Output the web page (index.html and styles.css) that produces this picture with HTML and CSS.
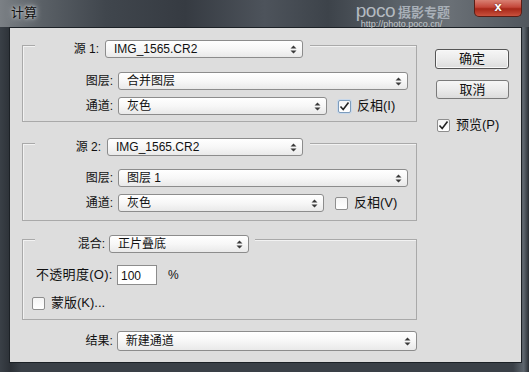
FILE: index.html
```html
<!DOCTYPE html>
<html lang="zh-CN">
<head>
    <meta charset="UTF-8">
    <title>计算</title>
    <link rel="stylesheet" href="styles.css">
</head>
<body>
    <div class="window">
        <div class="titlebar">
            <span class="title">计算</span>
            <div class="watermark">
                <div class="wm-top"><span class="wm-poco">poco</span><span class="wm-cn">摄影专题</span></div>
                <div class="wm-url">http://photo.poco.cn/</div>
            </div>
            <div class="close">x</div>
        </div>

        <div class="panel">
            <div class="main">
                <!-- 源 1 -->
                <div class="group g1">
                    <div class="group-head">
                        <span class="lbl head-lbl1">源 1:</span>
                        <div class="select src1">IMG_1565.CR2<span class="arrows"><svg width="7" height="9" viewBox="0 0 7 9"><path d="M3.5 0.5 L6.5 3.5 H0.5 Z M0.5 5.5 H6.5 L3.5 8.5 Z" fill="#3a3a3a"/></svg></span></div>
                    </div>
                    <div class="row r-layer">
                        <span class="lbl">图层:</span>
                        <div class="select wide">合并图层<span class="arrows"><svg width="7" height="9" viewBox="0 0 7 9"><path d="M3.5 0.5 L6.5 3.5 H0.5 Z M0.5 5.5 H6.5 L3.5 8.5 Z" fill="#3a3a3a"/></svg></span></div>
                    </div>
                    <div class="row r-channel">
                        <span class="lbl">通道:</span>
                        <div class="select ch1">灰色<span class="arrows"><svg width="7" height="9" viewBox="0 0 7 9"><path d="M3.5 0.5 L6.5 3.5 H0.5 Z M0.5 5.5 H6.5 L3.5 8.5 Z" fill="#3a3a3a"/></svg></span></div>
                        <div class="check invert">
                            <span class="box focus"><svg width="11" height="11" viewBox="0 0 11 11"><path d="M1.5 5.5 L4.2 8.5 L9.5 1.5" fill="none" stroke="#222" stroke-width="1.6"/></svg></span>
                            <span>反相(I)</span>
                        </div>
                    </div>
                </div>

                <!-- 源 2 -->
                <div class="group g2">
                    <div class="group-head">
                        <span class="lbl head-lbl2">源 2:</span>
                        <div class="select src2">IMG_1565.CR2<span class="arrows"><svg width="7" height="9" viewBox="0 0 7 9"><path d="M3.5 0.5 L6.5 3.5 H0.5 Z M0.5 5.5 H6.5 L3.5 8.5 Z" fill="#3a3a3a"/></svg></span></div>
                    </div>
                    <div class="row r-layer2">
                        <span class="lbl">图层:</span>
                        <div class="select wide">图层 1<span class="arrows"><svg width="7" height="9" viewBox="0 0 7 9"><path d="M3.5 0.5 L6.5 3.5 H0.5 Z M0.5 5.5 H6.5 L3.5 8.5 Z" fill="#3a3a3a"/></svg></span></div>
                    </div>
                    <div class="row r-channel">
                        <span class="lbl">通道:</span>
                        <div class="select ch2">灰色<span class="arrows"><svg width="7" height="9" viewBox="0 0 7 9"><path d="M3.5 0.5 L6.5 3.5 H0.5 Z M0.5 5.5 H6.5 L3.5 8.5 Z" fill="#3a3a3a"/></svg></span></div>
                        <div class="check invert">
                            <span class="box"></span>
                            <span>反相(V)</span>
                        </div>
                    </div>
                </div>

                <!-- 混合 -->
                <div class="group g3">
                    <div class="group-head head3">
                        <span class="lbl head-lbl3">混合:</span>
                        <div class="select blend">正片叠底<span class="arrows"><svg width="7" height="9" viewBox="0 0 7 9"><path d="M3.5 0.5 L6.5 3.5 H0.5 Z M0.5 5.5 H6.5 L3.5 8.5 Z" fill="#3a3a3a"/></svg></span></div>
                    </div>
                    <div class="opacity-row">
                        <span class="op-lbl">不透明度(O):</span>
                        <div class="num">100</div>
                        <span class="pct">%</span>
                    </div>
                    <div class="check mask">
                        <span class="box"></span>
                        <span>蒙版(K)...</span>
                    </div>
                </div>

                <div class="row result">
                    <span class="lbl">结果:</span>
                    <div class="select res">新建通道<span class="arrows"><svg width="7" height="9" viewBox="0 0 7 9"><path d="M3.5 0.5 L6.5 3.5 H0.5 Z M0.5 5.5 H6.5 L3.5 8.5 Z" fill="#3a3a3a"/></svg></span></div>
                </div>
            </div>

            <div class="side">
                <div class="btn default">确定</div>
                <div class="btn cancel">取消</div>
                <div class="check preview">
                    <span class="box"><svg width="11" height="11" viewBox="0 0 11 11"><path d="M1.5 5.5 L4.2 8.5 L9.5 1.5" fill="none" stroke="#222" stroke-width="1.6"/></svg></span>
                    <span>预览(P)</span>
                </div>
            </div>
        </div>
    </div>
</body>
</html>
```

FILE: styles.css
```css
* {
    box-sizing: border-box;
}
body {
    margin: 0;
    font-family: "Liberation Sans", "Noto Sans CJK SC", sans-serif;
    font-size: 12px;
    line-height: 16px;
    color: #111;
    background: #2b3036;
}
.window {
    width: 529px;
    height: 372px;
    overflow: hidden;
    background: linear-gradient(to right, #3a4047 0%, #2c3137 2%, #3a4047 4%, #3a4047 97%, #5d656d 99%, #2a2f35 100%);
}
.titlebar {
    height: 27px;
    display: flex;
    align-items: flex-start;
    background: linear-gradient(to right, #7b8085 0%, #5a6066 8%, #40464d 20%, #363b42 35%, #4d535b 50%, #3d434a 62%, #5a6168 75%, #6a7076 85%, #50565d 100%);
}
.title {
    margin: 5px 0 0 11px;
    font-size: 13px;
    color: #111;
    text-shadow: 0 0 6px #cfd3d6, 0 0 3px #cfd3d6;
}
.watermark {
    margin: 3px 0 0 auto;
    display: flex;
    flex-direction: column;
    color: #b4bac0;
}
.wm-top {
    display: flex;
    align-items: baseline;
    line-height: 15px;
}
.wm-poco {
    font-size: 19px;
    letter-spacing: -0.5px;
}
.wm-cn {
    margin-left: 3px;
    font-size: 13px;
    font-weight: bold;
    color: #a9b0b8;
}
.wm-url {
    margin: 0 0 0 5px;
    font-size: 9px;
    line-height: 9px;
    color: #c4c8cd;
}
.close {
    width: 48px;
    height: 17px;
    margin: 0 7px 0 24px;
    border: 1px solid #5a1e16;
    border-top: none;
    border-radius: 0 0 5px 5px;
    background: linear-gradient(#d98073 0%, #c4473a 45%, #a72718 55%, #c9513d 100%);
    color: #fff;
    font-weight: bold;
    font-size: 13px;
    line-height: 14px;
    text-align: center;
    text-shadow: 0 0 2px #5a1e16;
}

.panel {
    margin-left: 9px;
    width: 513px;
    height: 336px;
    border: 1px solid #1c2126;
    background: #dddddd;
    display: flex;
    padding-left: 12px;
}
.main {
    width: 395px;
    display: flex;
    flex-direction: column;
}
.group {
    border: 1px solid #a9a9a9;
    box-shadow: inset 1px 1px 0 #f2f2f2;
}
.g1 {
    margin-top: 17px;
    padding-bottom: 6px;
}
.g2 {
    margin-top: 21px;
    padding-bottom: 8px;
}
.g3 {
    margin-top: 18px;
    padding-bottom: 8px;
}
.group-head {
    display: flex;
    align-items: center;
    width: fit-content;
    margin: -6px 0 0 12px;
    padding-right: 7px;
    background: #dddddd;
}
.head3 {
    margin-top: -5px;
    padding-right: 6px;
}
.lbl {
    text-align: right;
    white-space: nowrap;
}
.head-lbl1 {
    width: 64px;
    margin-right: 6px;
}
.head-lbl2 {
    width: 66px;
    margin-right: 6px;
}
.head-lbl3 {
    width: 70px;
    margin-right: 4px;
}
.row {
    display: flex;
    align-items: center;
}
.row .lbl {
    width: 90px;
    margin-right: 5px;
}
.r-layer {
    margin-top: 14px;
}
.r-layer2 {
    margin-top: 13px;
}
.r-channel {
    margin-top: 7px;
}

.select {
    position: relative;
    height: 18px;
    display: flex;
    align-items: center;
    padding-left: 8px;
    border: 1px solid #8c8c8c;
    border-radius: 3px;
    background: linear-gradient(#ffffff 0%, #f7f7f7 50%, #e9e9e9 100%);
    white-space: nowrap;
}
.arrows {
    margin-left: auto;
    margin-right: 5px;
    display: flex;
}
.src1 {
    width: 198px;
}
.src2 {
    width: 196px;
}
.wide {
    width: 290px;
}
.ch1 {
    width: 209px;
}
.ch2 {
    width: 206px;
}
.blend {
    width: 140px;
}

.check {
    display: flex;
    align-items: center;
    gap: 6px;
    white-space: nowrap;
}
.box {
    width: 13px;
    height: 13px;
    border: 1px solid #8e8e8e;
    border-radius: 2px;
    background: linear-gradient(#f4f4f4, #ffffff);
    display: flex;
    align-items: center;
    justify-content: center;
}
.box.focus {
    border-color: #7d9cbc;
    box-shadow: 0 0 0 1px #c8d8ea;
}
.invert {
    margin-left: 11px;
    font-size: 13px;
}

.opacity-row {
    display: flex;
    align-items: center;
    margin: 12px 0 0 13px;
}
.op-lbl {
    width: 80px;
    font-size: 13px;
    letter-spacing: 0.3px;
    white-space: nowrap;
}
.num {
    width: 40px;
    height: 20px;
    margin-left: 1px;
    padding: 2px 0 0 3px;
    border: 1px solid #8c8c8c;
    background: #fff;
}
.pct {
    margin-left: 11px;
}
.mask {
    margin: 10px 0 0 9px;
    font-size: 13px;
}

.result {
    margin-top: 11px;
}
.result .lbl {
    width: 91px;
    margin-right: 4px;
}
.res {
    width: 301px;
    height: 20px;
}

.side {
    margin-left: 18px;
    width: 74px;
    display: flex;
    flex-direction: column;
}
.btn {
    height: 20px;
    border: 1px solid #7a7a7a;
    border-radius: 3px;
    background: linear-gradient(#f6f6f6 0%, #ebebeb 50%, #dcdcdc 100%);
    text-align: center;
    line-height: 17px;
    font-size: 13px;
}
.default {
    margin-top: 21px;
    border-color: #555;
    box-shadow: inset 0 0 0 1px #f8f8f8;
}
.cancel {
    margin-top: 11px;
    margin-left: 1px;
    height: 19px;
}
.preview {
    margin: 18px 0 0 2px;
    font-size: 13px;
}
```
